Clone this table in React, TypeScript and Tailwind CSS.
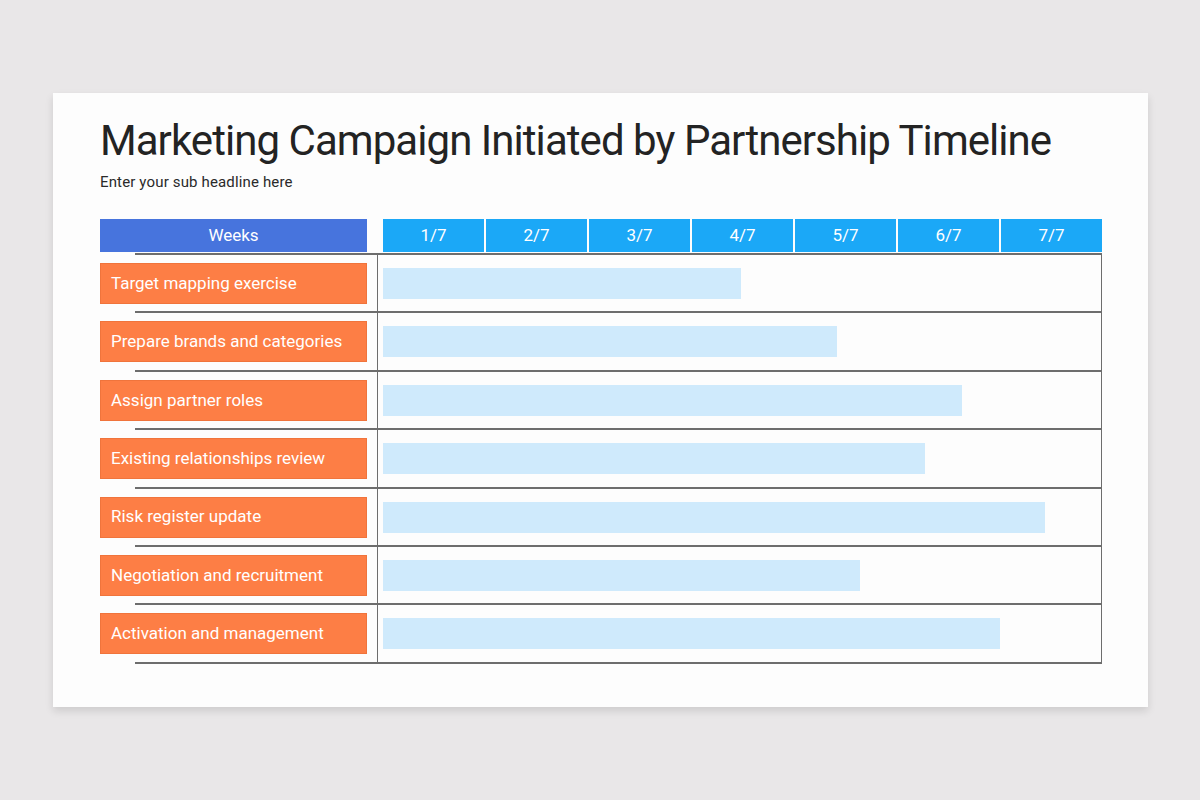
import React from "react";

const weeks = ["1/7", "2/7", "3/7", "4/7", "5/7", "6/7", "7/7"];
const tasks = [
  { name: "Target mapping exercise", w: 358 },
  { name: "Prepare brands and categories", w: 454 },
  { name: "Assign partner roles", w: 579 },
  { name: "Existing relationships review", w: 542 },
  { name: "Risk register update", w: 662 },
  { name: "Negotiation and recruitment", w: 477 },
  { name: "Activation and management", w: 617 },
];

export default function App() {
  return (
    <div
      className="w-[1200px] h-[800px] bg-[#e9e7e8] pt-[93px] pl-[53px]"
      style={{ fontFamily: "Roboto, 'Liberation Sans', sans-serif" }}
    >
      <div className="w-[1095px] h-[614px] bg-[#fdfdfd] shadow-[0_4px_8px_rgba(0,0,0,0.12)] pl-[47px] pt-[24px]">
        <h1 className="text-[42px] leading-[48px] text-[#232323] font-normal tracking-[-0.95px]">
          Marketing Campaign Initiated by Partnership Timeline
        </h1>
        <p className="mt-[7px] text-[15px] leading-[20px] text-[#2a2a2a] tracking-[0.15px]">
          Enter your sub headline here
        </p>

        <div className="mt-[27px] w-[1002px]">
          <div className="flex h-[33px]">
            <div className="w-[267px] bg-[#4774dd] text-white text-[17px] flex items-center justify-center">
              Weeks
            </div>
            <div className="ml-[16px] flex-1 flex gap-[2px]">
              {weeks.map((w) => (
                <div
                  key={w}
                  className="flex-1 bg-[#1ba8f7] text-white text-[17px] flex items-center justify-center"
                >
                  {w}
                </div>
              ))}
            </div>
          </div>

          <div className="mt-[1px] ml-[35px] border-t-2 border-[#6d6d6d]">
            {tasks.map((t) => (
              <div key={t.name} className="flex h-[58.4px] border-b-2 border-[#6d6d6d]">
                <div className="w-[242px] shrink-0 pt-[8px]">
                  <div className="-ml-[35px] w-[267px] h-[41px] bg-[#fd7e45] border border-[#f0743c] text-white text-[17px] flex items-center pl-[10px]">
                    {t.name}
                  </div>
                </div>
                <div className="flex-1 border-l border-r border-[#6d6d6d] pt-[13px] pl-[5px]">
                  <div className="h-[31px] bg-[#cfeafc]" style={{ width: t.w }} />
                </div>
              </div>
            ))}
          </div>
        </div>
      </div>
    </div>
  );
}
